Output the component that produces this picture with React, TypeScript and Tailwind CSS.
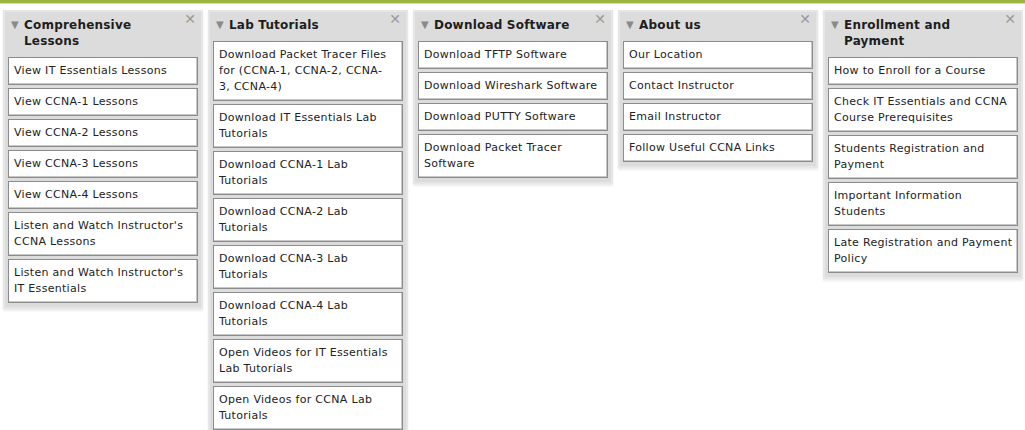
import type { ReactNode } from "react";

const columns: { title: string; links: ReactNode[] }[] = [
  {
    title: "Comprehensive Lessons",
    links: [
      "View IT Essentials Lessons",
      "View CCNA-1 Lessons",
      "View CCNA-2 Lessons",
      "View CCNA-3 Lessons",
      "View CCNA-4 Lessons",
      "Listen and Watch Instructor's CCNA Lessons",
      "Listen and Watch Instructor's IT Essentials",
    ],
  },
  {
    title: "Lab Tutorials",
    links: [
      <>
        Download Packet Tracer Files for (CCNA-1, CCNA-2, CCNA-
        <br />
        3, CCNA-4)
      </>,
      "Download IT Essentials Lab Tutorials",
      "Download CCNA-1 Lab Tutorials",
      "Download CCNA-2 Lab Tutorials",
      "Download CCNA-3 Lab Tutorials",
      "Download CCNA-4 Lab Tutorials",
      "Open Videos for IT Essentials Lab Tutorials",
      "Open Videos for CCNA Lab Tutorials",
    ],
  },
  {
    title: "Download Software",
    links: [
      "Download TFTP Software",
      "Download Wireshark Software",
      "Download PUTTY Software",
      "Download Packet Tracer Software",
    ],
  },
  {
    title: "About us",
    links: ["Our Location", "Contact Instructor", "Email Instructor", "Follow Useful CCNA Links"],
  },
  {
    title: "Enrollment and Payment",
    links: [
      "How to Enroll for a Course",
      "Check IT Essentials and CCNA Course Prerequisites",
      "Students Registration and Payment",
      "Important Information Students",
      "Late Registration and Payment Policy",
    ],
  },
];

function Widget({ title, links }: { title: string; links: ReactNode[] }) {
  return (
    <div className="w-[200px] bg-[#dcdcdc] border-2 border-[#e6e6e6] shadow-[0_2px_2px_rgba(0,0,0,0.08)] px-[3px] pb-[4px]">
      {/* Header */}
      <div className="relative flex items-start pt-[5px] pb-[8px] pl-[3px] pr-[16px]">
        <span className="text-[#8a8a8a] text-[10px] leading-[16px] w-[13px] shrink-0">▼</span>
        <h2 className="text-[12px] leading-[16px] font-bold text-[#1e1e1e] tracking-[0.2px]">{title}</h2>
        <span className="absolute right-[2px] top-[0px] text-[#9a9a9a] text-[14px] font-bold leading-[14px]">✕</span>
      </div>
      {/* Links */}
      <div className="flex flex-col gap-[3px]">
        {links.map((l, i) => (
          <a
            key={i}
            className="block bg-white border border-[#8c8c8c] shadow-[inset_-1px_-1px_0_#c8c8c8] pl-[5px] pr-[4px] py-[5px] text-[11px] leading-[16px] tracking-[0.3px] text-[#222]"
          >
            {l}
          </a>
        ))}
      </div>
    </div>
  );
}

export default function App() {
  return (
    <div className="w-[1025px] h-[430px] bg-white overflow-hidden" style={{ fontFamily: '"DejaVu Sans", Verdana, sans-serif' }}>
      <div className="h-[3px] bg-[#9cb440]" />
      <div className="h-[1px] bg-[#d9e3a8]" />
      <div className="flex items-start gap-[5px] pl-[3px] pt-[6px]">
        {columns.map((c) => (
          <Widget key={c.title} title={c.title} links={c.links} />
        ))}
      </div>
    </div>
  );
}
